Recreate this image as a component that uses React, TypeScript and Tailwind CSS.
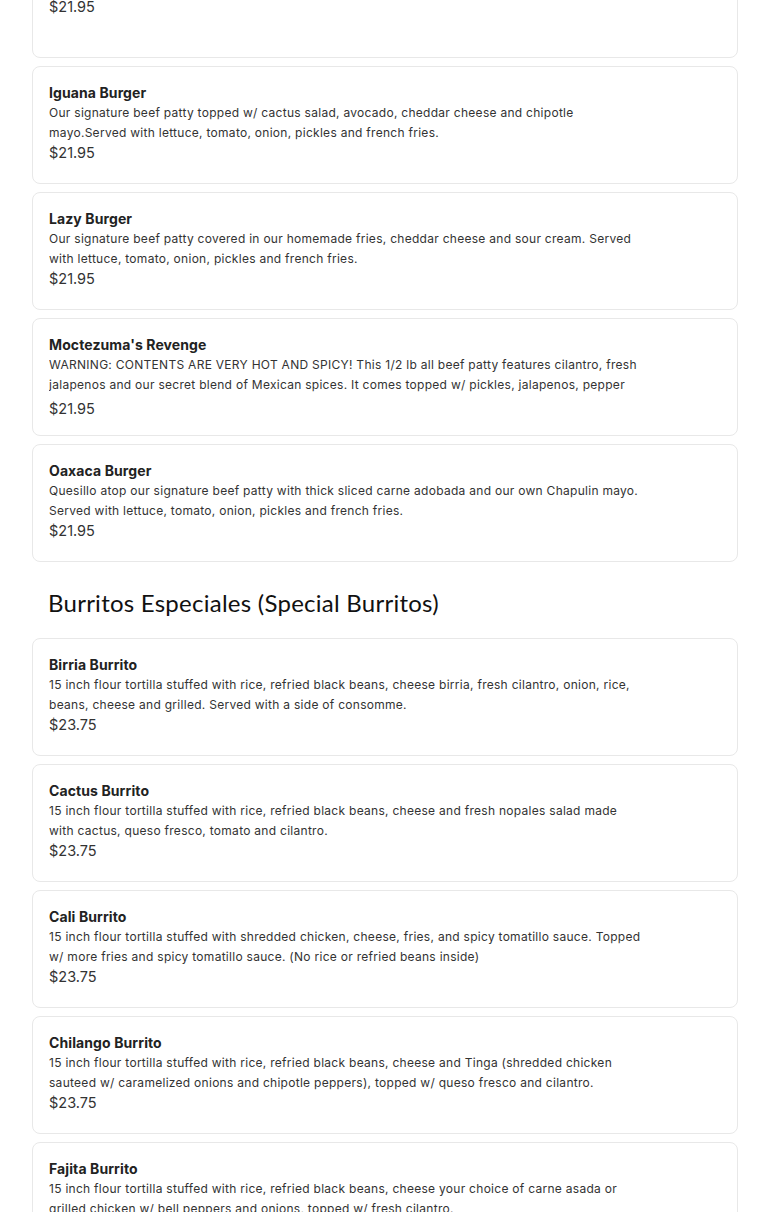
import React from 'react';

type Item = { name: string; desc: string; price: string; shift?: boolean };

const burgers: Item[] = [
    { name: 'Guadalajara Burger', desc: 'Our signature beef patty with grilled onions and pepper jack cheese.', price: '$21.95' },
    { name: 'Iguana Burger', desc: 'Our signature beef patty topped w/ cactus salad, avocado, cheddar cheese and chipotle mayo.Served with lettuce, tomato, onion, pickles and french fries.', price: '$21.95' },
    { name: 'Lazy Burger', desc: 'Our signature beef patty covered in our homemade fries, cheddar cheese and sour cream. Served with lettuce, tomato, onion, pickles and french fries.', price: '$21.95' },
    { name: "Moctezuma's Revenge", desc: 'WARNING: CONTENTS ARE VERY HOT AND SPICY! This 1/2 lb all beef patty features cilantro, fresh jalapenos and our secret blend of Mexican spices. It comes topped w/ pickles, jalapenos, pepper', price: '$21.95', shift: true },
    { name: 'Oaxaca Burger', desc: 'Quesillo atop our signature beef patty with thick sliced carne adobada and our own Chapulin mayo. Served with lettuce, tomato, onion, pickles and french fries.', price: '$21.95' },
];

const burritos: Item[] = [
    { name: 'Birria Burrito', desc: '15 inch flour tortilla stuffed with rice, refried black beans, cheese birria, fresh cilantro, onion, rice, beans, cheese and grilled. Served with a side of consomme.', price: '$23.75' },
    { name: 'Cactus Burrito', desc: '15 inch flour tortilla stuffed with rice, refried black beans, cheese and fresh nopales salad made with cactus, queso fresco, tomato and cilantro.', price: '$23.75' },
    { name: 'Cali Burrito', desc: '15 inch flour tortilla stuffed with shredded chicken, cheese, fries, and spicy tomatillo sauce. Topped w/ more fries and spicy tomatillo sauce. (No rice or refried beans inside)', price: '$23.75' },
    { name: 'Chilango Burrito', desc: '15 inch flour tortilla stuffed with rice, refried black beans, cheese and Tinga (shredded chicken sauteed w/ caramelized onions and chipotle peppers), topped w/ queso fresco and cilantro.', price: '$23.75' },
    { name: 'Fajita Burrito', desc: '15 inch flour tortilla stuffed with rice, refried black beans, cheese your choice of carne asada or grilled chicken w/ bell peppers and onions, topped w/ fresh cilantro.', price: '$23.75' },
];

const MenuCard: React.FC<{ item: Item }> = ({ item }) => (
    <div className={`min-h-[118px] rounded-lg border border-[#e8e8e8] bg-white px-4 pt-4 ${item.shift ? 'pb-4' : 'pb-5'}`}>
        <div className="text-[14px] leading-5 font-bold text-[#222] tracking-[0.1px]">{item.name}</div>
        <p className="max-w-[596px] max-h-10 overflow-hidden text-[12px] leading-5 tracking-[0.28px] text-[#333]">{item.desc}</p>
        <div className={`text-[14.5px] leading-5 text-[#333] ${item.shift ? 'mt-1' : ''}`}>{item.price}</div>
    </div>
);

export default function App() {
    return (
        <div className="min-h-screen bg-white" style={{ fontFamily: 'Inter, "Liberation Sans", sans-serif' }}>
            <div className="-mt-[60px] px-8">
                <div className="flex flex-col gap-2">
                    {burgers.map(b => <MenuCard key={b.name} item={b} />)}
                </div>
                <h2 className="mt-[27px] mb-[21px] pl-4 text-[24px] leading-7 text-[#111] tracking-[0.25px]" style={{ fontFamily: 'Lato, "Open Sans", sans-serif' }}>
                    Burritos Especiales (Special Burritos)
                </h2>
                <div className="flex flex-col gap-2">
                    {burritos.map(b => <MenuCard key={b.name} item={b} />)}
                </div>
            </div>
        </div>
    );
}
